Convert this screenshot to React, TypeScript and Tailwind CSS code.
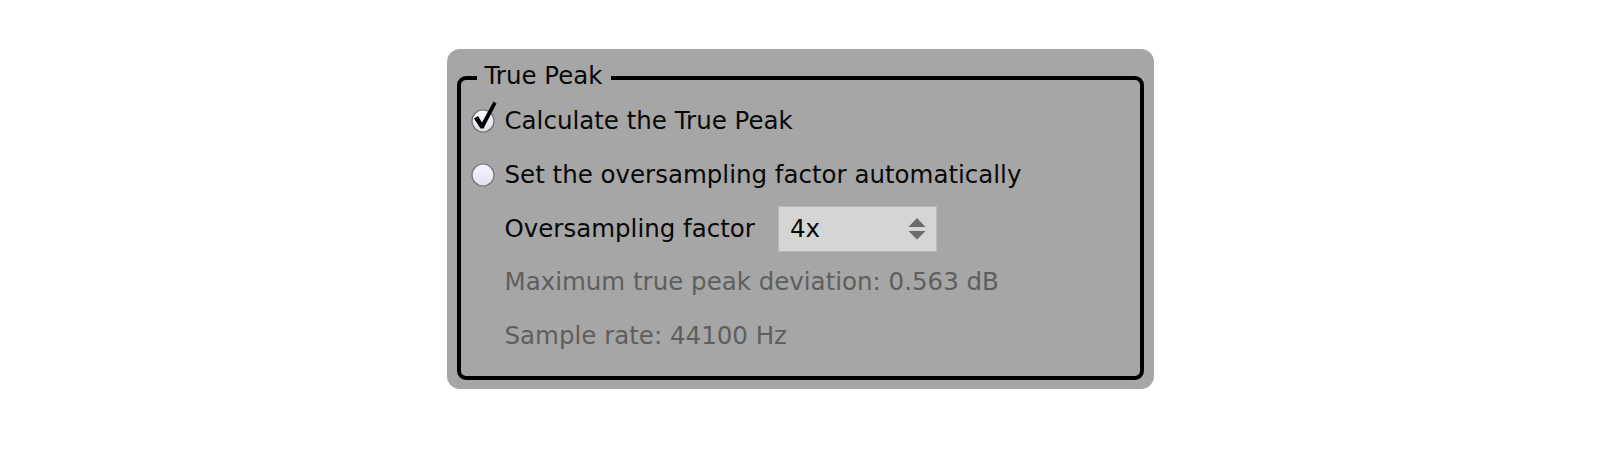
import React from 'react';

function CheckedBox() {
  return (
    <svg width="24" height="24" viewBox="0 0 24 24" className="overflow-visible shrink-0">
      <defs>
        <linearGradient id="boxFill" x1="0" y1="0" x2="0" y2="1">
          <stop offset="0" stopColor="#fbfbff" />
          <stop offset="1" stopColor="#dcdce8" />
        </linearGradient>
      </defs>
      <circle cx="12" cy="12" r="11" fill="url(#boxFill)" stroke="#6f6f6f" strokeWidth="1.2" />
      <path d="M3 9.5 L7 7 L11 13.5 L22.5 -7.5 L25.5 -5.5 L12.5 19.5 L9.5 19.5 Z" fill="#000" />
    </svg>
  );
}

function RadioOff() {
  return (
    <svg width="24" height="24" viewBox="0 0 24 24" className="shrink-0">
      <defs>
        <linearGradient id="radioFill" x1="0" y1="0" x2="0" y2="1">
          <stop offset="0" stopColor="#f6f6ff" />
          <stop offset="1" stopColor="#e2e2f0" />
        </linearGradient>
      </defs>
      <circle cx="12" cy="12" r="11" fill="url(#radioFill)" stroke="#757575" strokeWidth="1.2" />
    </svg>
  );
}

function StepArrows() {
  return (
    <svg width="18" height="22" viewBox="0 0 18 22" className="shrink-0">
      <path d="M9 0 L17.5 9 L0.5 9 Z" fill="#6b6b6b" />
      <path d="M0.5 13 L17.5 13 L9 21.5 Z" fill="#6b6b6b" />
    </svg>
  );
}

export default function App() {
  return (
    <div className="w-[1600px] h-[450px] bg-white flex justify-center pt-[49px] font-['DejaVu_Sans',sans-serif] text-[24.5px] text-[#080808]">
      <div className="w-[707px] h-[340px] bg-[#a6a6a6] rounded-[13px] px-[10px] pt-[15px] pb-[9px]">
        <fieldset className="h-full border-4 border-black rounded-[9px] pl-[10px] pr-3 pt-[2px] m-0">
          <legend className="ml-[6px] px-[8px] leading-[24px] pb-[4px]">True Peak</legend>

          {/* Calculate */}
          <div className="h-[54px] flex items-center gap-[10px]">
            <CheckedBox />
            <span>Calculate the True Peak</span>
          </div>

          {/* Auto factor */}
          <div className="h-[54px] flex items-center gap-[10px]">
            <RadioOff />
            <span>Set the oversampling factor automatically</span>
          </div>

          {/* Factor select */}
          <div className="h-[54px] flex items-center pl-[34px]">
            <span>Oversampling factor</span>
            <div className="ml-[23px] w-[159px] h-[46px] bg-[#d5d5d5] border border-[#bababa] flex items-center justify-between pl-[11px] pr-[10px]">
              <span>4x</span>
              <StepArrows />
            </div>
          </div>

          <div className="h-[53px] flex items-center pl-[34px] text-[#5e5e5e]">
            Maximum true peak deviation: 0.563 dB
          </div>
          <div className="h-[54px] flex items-center pl-[34px] text-[#5e5e5e]">
            Sample rate: 44100 Hz
          </div>
        </fieldset>
      </div>
    </div>
  );
}
